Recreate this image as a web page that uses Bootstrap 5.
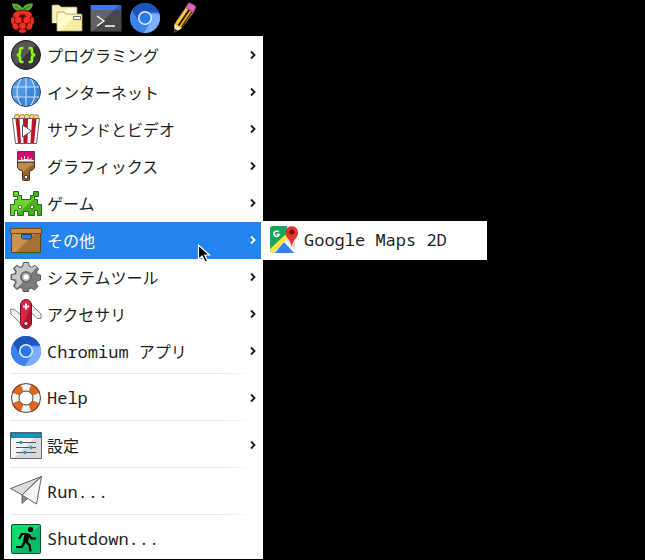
<!DOCTYPE html>
<html lang="ja">
<head>
<meta charset="utf-8">
<meta name="viewport" content="width=device-width, initial-scale=1">
<title>メニュー</title>
<link href="https://cdn.jsdelivr.net/npm/bootstrap@5.3.0/dist/css/bootstrap.min.css" rel="stylesheet">
<style>
body { background: #000; color: #1c1f22; font: 16px/24px "Noto Sans CJK JP", sans-serif; overflow: hidden; }
.latin { font-family: "Noto Sans Mono", "DejaVu Sans Mono", monospace; font-size: 17px; }
svg { display: block; flex: none; }
.panel { height: 36px; padding: 2px 0 2px 6px; gap: 7px; }
.panel .launcher { margin-right: 6px; }
.launcher { background: none; border: 0; padding: 0; }
.start-menu { width: 259px; margin-left: 4px; padding: 1px 2px 1px 1px; background: #fff; }
.entry { display: flex; width: 100%; gap: 5px; align-items: center; padding: 2px 5px 3px; border: 0; background: none; color: inherit; text-align: left; text-decoration: none; white-space: nowrap; }
.entry.current { background: #2384ef; color: #fff; }
.divider { height: 1px; margin: 3px 8px 6px 5px; background: linear-gradient(90deg, #e6e6e6 85%, #fff); }
.submenu { left: 100%; top: -1px; margin-left: 2px; width: 224px; background: #fff; color: #1c1f22; padding: 1px; z-index: 2; }
.pointer { left: 192px; top: 21px; z-index: 3; pointer-events: none; }
</style>
<script src="https://cdn.jsdelivr.net/npm/bootstrap@5.3.0/dist/js/bootstrap.bundle.min.js"></script>
</head>
<body>
<svg width="0" height="0" class="position-absolute" aria-hidden="true">
  <symbol id="chev" viewBox="0 0 6 10"><path d="M1 1.500 4.500 5 1 8.500" fill="none" stroke="currentColor" stroke-width="1.900"/></symbol>
  <symbol id="chromium" viewBox="0 0 32 32">
    <circle cx="16" cy="16" r="15" fill="#2f79e6"/>
    <path d="M3 8.500A15 15 0 0 1 29 8.500L30 10H16L10 19.500Z" fill="#1b55bd"/>
    <path d="M30.300 11.500A15 15 0 0 1 14.500 31L21.500 20 22 11.500Z" fill="#7baefb"/>
    <path d="M3 8.500 10 19.500 16 23 21.500 20 14.500 31A15 15 0 0 1 3 8.500Z" fill="#3b82ec"/>
    <circle cx="16" cy="16" r="7" fill="#e8f1ff"/><circle cx="16" cy="16" r="5.500" fill="#287bea"/>
  </symbol>
</svg>

<nav class="panel d-flex align-items-center" aria-label="パネル">
  <button class="launcher" type="button" aria-label="メニュー">
    <svg width="32" height="32" viewBox="0 0 32 32">
      <path d="M15.500 9C10 9.500 6.500 7 6 1.500c5-.5 8.500 1 10.500 4.500 2-3.500 5.500-5 10.500-4.500C26.500 7 23 9.500 17.500 9Z" fill="#58ab38"/><path d="m9 4 7 4.500L24 4" fill="none" stroke="#2c6a1d"/>
      <path d="M16.500 8c5 0 9 2 9.500 6 3 3 2.500 7 .5 9-1 4-5 6.500-10 8.500-5-2-9-4.500-10-8.500-2-2-2.500-6 .5-9 .5-4 4.500-6 9.500-6Z" fill="#5c100d"/>
      <g fill="#f52e25"><ellipse cx="16.500" cy="10.500" rx="3.600" ry="1.900"/><ellipse cx="10.700" cy="12.500" rx="3.600" ry="2.700" transform="rotate(-35 10.700 12.500)"/><ellipse cx="22.300" cy="12.500" rx="3.600" ry="2.700" transform="rotate(35 22.300 12.500)"/><circle cx="12.300" cy="18" r="3.300"/><circle cx="20.700" cy="18" r="3.300"/><ellipse cx="6.800" cy="18.500" rx="1.700" ry="3.500"/><ellipse cx="26.200" cy="18.500" rx="1.700" ry="3.500"/><circle cx="16.500" cy="23.700" r="3.200"/><ellipse cx="9.500" cy="24.300" rx="2.800" ry="3.300" transform="rotate(-30 9.500 24.300)"/><ellipse cx="23.500" cy="24.300" rx="2.800" ry="3.300" transform="rotate(30 23.500 24.300)"/><ellipse cx="16.500" cy="29" rx="3.500" ry="1.700"/></g>
    </svg>
  </button>
  <button class="launcher me-0" type="button" aria-label="ファイルマネージャ">
    <svg width="32" height="32" viewBox="0 0 32 32">
      <path d="M1 4q0-1 1-1h6l2 2h15q1 0 1 1v15H1Z" fill="#f8efb5" stroke="#a69e72" stroke-width=".7"/><path d="M2 21 17 6h8v15Z" fill="#fffbdc"/>
      <path d="M6 11q0-1 1-1h6l2 2h15q1 0 1 1v16H6Z" fill="#f7eda2" stroke="#a69e72" stroke-width=".8"/><path d="M6.500 28.500V13l1-2h5l2 2h11L10 28.500Z" fill="#fff9cc"/><path d="M22.500 14.500h7v3h-7z" fill="#fff" stroke="#777"/>
    </svg>
  </button>
  <button class="launcher me-0" type="button" aria-label="ターミナル">
    <svg width="32" height="32" viewBox="0 0 32 32">
      <path d="M.5 3.500h31v26H.5z" fill="#484848" stroke="#292929"/><path d="M1 29V8h23L3 29Z" fill="#636363"/><path d="M1 3h30v5H1z" fill="#2857d4"/><path d="M1 3h28l-5 5H1z" fill="#4474f2"/>
      <path d="m7 14 7 5-7 5M15 24h10" fill="none" stroke="#fff" stroke-width="1.300"/>
    </svg>
  </button>
  <button class="launcher me-0" type="button" aria-label="ウェブブラウザ"><svg width="32" height="32"><use href="#chromium"/></svg></button>
  <button class="launcher" type="button" aria-label="エディタ">
    <svg width="32" height="32" viewBox="0 0 32 32">
      <path d="m6.500 22 11.500-17 8 5-12.500 16.500-7 3Z" fill="#f4ab26" stroke="#49300d" stroke-width=".7"/><path d="M8.500 22 19.500 6" stroke="#ffc846" stroke-width="2.500"/><path d="M10.500 23.500 21.500 7.500" stroke="#242018" stroke-width="2"/><path d="M13.500 25 24.500 9" stroke="#242018" stroke-width="1.200"/>
      <path d="M17.500 5.500 20 1.500q1-1 2-.7l5 2.700q1.500 1 .7 2.500L25.500 10.500Z" fill="#dc60bd" stroke="#754064" stroke-width=".7"/><path d="m6.500 22 7 4.500-7 4Z" fill="#f9e9c5"/><path d="m6.500 26.500 3.300 2.200-3.300 1.800Z" fill="#222"/>
    </svg>
  </button>
</nav>

<main class="start-menu">
  <button class="entry" type="button">
    <svg width="32" height="32" viewBox="0 0 32 32"><circle cx="16" cy="16" r="14.500" fill="#353535"/><path d="M5.500 26.500A14.500 14.500 0 0 1 26.500 5.500Z" fill="#555"/><circle cx="16" cy="16" r="14.500" fill="none" stroke="#202020"/><path d="M13.500 9H12q-2 0-2 2v2.500q0 2-3 2.500 3 .5 3 2.500V21q0 2 2 2h1.500M18.500 9H20q2 0 2 2v2.500q0 2 3 2.500-3 .5-3 2.500V21q0 2-2 2h-1.500" fill="none" stroke="#8df21b" stroke-width="2.700"/></svg>
    <span class="flex-grow-1">プログラミング</span><svg width="6" height="10"><use href="#chev"/></svg>
  </button>
  <button class="entry" type="button">
    <svg width="32" height="32" viewBox="0 0 32 32"><circle cx="16" cy="16" r="14.500" fill="#3d86d8"/><path d="M5.500 26.500A14.500 14.500 0 0 1 26.500 5.500Z" fill="#5499e5"/><path d="M16 1v30M2 11h28M2 21h28M11.500 2q-9 14 0 28M20.500 2q9 14 0 28" fill="none" stroke="#c9e2ff" stroke-width="1.100"/><circle cx="16" cy="16" r="14.500" fill="none" stroke="#284b73"/></svg>
    <span class="flex-grow-1">インターネット</span><svg width="6" height="10"><use href="#chev"/></svg>
  </button>
  <button class="entry" type="button">
    <svg width="32" height="32" viewBox="0 0 32 32"><g fill="#f5d67e" stroke="#a77b32" stroke-width=".8"><circle cx="7" cy="4" r="2.700"/><circle cx="12" cy="4" r="2.700"/><circle cx="17" cy="4" r="2.700"/><circle cx="22" cy="4" r="2.700"/><circle cx="26" cy="4" r="2.500"/></g><path d="M2.500 5.500h27L26.500 30.500h-21Z" fill="#fff"/><path d="M5.500 6h4l1.500 24H8ZM13 6h5l-.5 24h-4ZM22 6h4.500L24 30h-3.500Z" fill="#bd1427"/><path d="M2.500 5.500h27L26.500 30.500h-21Z" fill="none" stroke="#666"/><path d="m12.500 12 9 6-9 6Z" fill="#fff" stroke="#555"/></svg>
    <span class="flex-grow-1">サウンドとビデオ</span><svg width="6" height="10"><use href="#chev"/></svg>
  </button>
  <button class="entry" type="button">
    <svg width="32" height="32" viewBox="0 0 32 32"><path d="M7.500 12h17v5q0 3-5 4v9q0 .5-1 .5h-5q-1 0-1-1V21q-5-1-5-4Z" fill="#9a6630" stroke="#4c3117"/><path d="M8 17V13h16l-11 9q0-1.500-1-2-4-1-4-3Z" fill="#c18c49"/><path d="M7.500 1.500h17V12h-17z" fill="#f1edf0" stroke="#444"/><path d="M8 2h16v8h-2.500V8h-1v1.500h-2V6.500h-1V9h-2.500V6h-1v3.500h-2V7h-1v3H8Z" fill="#d30b70"/><circle cx="16" cy="27" r="1.800" fill="#fff" stroke="#4c3117"/></svg>
    <span class="flex-grow-1">グラフィックス</span><svg width="6" height="10"><use href="#chev"/></svg>
  </button>
  <button class="entry" type="button">
    <svg width="32" height="32" viewBox="0 0 32 32"><path id="alien" d="M3.500 4.500h5v4h3v4h9v-4h3v-4h5v5h-4v3h3v5h4v11h-4v-5h-3v5h-6v-4h-5v4h-6v-5h-3v5h-4v-11h4v-5h3v-3h-4Z" fill="#46b01e"/><path d="M4 5h4v4h3v4h10l3-4v3l-17 15v-4H4v5H1V18h3v-5h3V9H4Z" fill="#6bd332"/><path d="M3.500 4.500h5v4h3v4h9v-4h3v-4h5v5h-4v3h3v5h4v11h-4v-5h-3v5h-6v-4h-5v4h-6v-5h-3v5h-4v-11h4v-5h3v-3h-4Z" fill="none" stroke="#24691b"/><path d="M8.500 18.500h3v3h-3zM20.500 18.500h3v3h-3z" fill="#fff" stroke="#56704e"/></svg>
    <span class="flex-grow-1">ゲーム</span><svg width="6" height="10"><use href="#chev"/></svg>
  </button>
  <div class="position-relative">
    <button class="entry current" type="button" aria-expanded="true">
      <svg width="32" height="32" viewBox="0 0 32 32"><path d="M1.500 9.500h29v19h-29z" fill="#a47134" stroke="#644019"/><path d="M2 28V10h22L6 28Z" fill="#cb9350"/><path d="M.5 4.500h31v5H.5z" fill="#c98b46" stroke="#744817"/><path d="M11.500 10.500h10v3l-1 1.500h-8l-1-1.500Z" fill="#2384ef" stroke="#3a3945"/></svg>
      <span class="flex-grow-1">その他</span><svg width="6" height="10"><use href="#chev"/></svg>
    </button>
    <div class="submenu position-absolute">
      <a class="entry" href="#maps">
        <svg width="30" height="32" viewBox="0 0 30 32"><path d="M2 4q0-2 2-2h22v25q0 2-2 2H4q-2 0-2-2Z" fill="#ddd"/><path d="M1 5q0-3 3-3h14v12L1 28Z" fill="#18a561"/><path d="m6 29 9-11 10 11Z" fill="#347ff1"/><path d="m16 14 10 12v3L14 17Z" fill="#f4f4f4"/><path d="M1 25 17 10l2 4L4 29q-3 0-3-4Z" fill="#ffe43c"/><path d="M9.800 7.800a2.800 2.800 0 1 0 .6 2.700H7.500" fill="none" stroke="#fff" stroke-width="1.500"/><path d="M22.500 23q-1-6-4-9-2-2-2-5.500a6.300 6.300 0 0 1 12.600 0q0 3-2 5.500-4 4-4.600 9Z" fill="#e6332a"/><circle cx="22.800" cy="8" r="2.500" fill="#701512"/></svg>
        <span class="latin">Google Maps 2D</span>
      </a>
    </div>
    <svg class="pointer position-absolute" width="14" height="22" viewBox="0 0 14 22" aria-hidden="true"><path d="M1.500 2v14.500l3.500-3.500 3 6 2.500-1.300-2.800-5.700h4.600Z" fill="#000" stroke="#fff" stroke-width="1.200"/></svg>
  </div>
  <button class="entry" type="button">
    <svg width="32" height="32" viewBox="0 0 32 32"><path id="gear" d="m13.500 1.500h5l.8 3.800 2.400 1 3.300-2 3.500 3.500-2 3.300 1 2.400 3 .5v5l-3.500.8-1 2.400 2 3.300-3.500 3.500-3.300-2-2.400 1-.5 2.500h-5l-.8-3-2.400-1-3.300 2-3.300-3.500 2-3.300-1-2.400-3.500-.8v-5l3.500-.5 1-2.400-2-3.300L6.800 4.300l3.300 2 2.400-1Z" fill="#7b7b7b" stroke="#555"/><path d="m14 2h4l.8 3.800 3 1 3-2 2 1.500L7 27l-2-2 2-3.500-1-3-4-1v-3.500l4-.5 1-3-2-3.300 2-2 3 2 3-1Z" fill="#c5c7c6"/><circle cx="16" cy="16" r="5" fill="#b8b8b8" stroke="#6a6a6a" stroke-width="2"/><circle cx="16" cy="16" r="2.500" fill="#fff"/></svg>
    <span class="flex-grow-1">システムツール</span><svg width="6" height="10"><use href="#chev"/></svg>
  </button>
  <button class="entry" type="button">
    <svg width="32" height="32" viewBox="0 0 32 32"><path d="M12 27 1 16l-.5-5 4 .5L13 19ZM20 5l11 11v4.500h-4L18 11Z" fill="#eef0f0" stroke="#666" stroke-width=".8"/><rect x="10.500" y="1.500" width="11" height="29" rx="5.500" fill="#dd2145" stroke="#711323"/><path d="M21 9v16q0 4-5 5-3 0-4-2Z" fill="#b3102f"/><path d="M16 5.500v6M13 8.500h6" stroke="#fff" stroke-width="2"/><circle cx="16" cy="25.500" r="2.200" fill="#d5d5d5" stroke="#7c1024"/></svg>
    <span class="flex-grow-1">アクセサリ</span><svg width="6" height="10"><use href="#chev"/></svg>
  </button>
  <button class="entry" type="button">
    <svg width="32" height="32"><use href="#chromium"/></svg>
    <span class="flex-grow-1"><span class="latin">Chromium </span>アプリ</span><svg width="6" height="10"><use href="#chev"/></svg>
  </button>
  <hr class="divider border-0 opacity-100">
  <button class="entry" type="button">
    <svg width="32" height="32" viewBox="0 0 32 32"><circle cx="16" cy="16" r="11" fill="none" stroke="#f4f4f4" stroke-width="8"/><path d="M20 5.500A11 11 0 0 1 26.500 12M26.500 20a11 11 0 0 1-6.500 6.500M12 26.500A11 11 0 0 1 5.500 20M5.500 12A11 11 0 0 1 12 5.500" fill="none" stroke="#df671f" stroke-width="8"/><circle cx="16" cy="16" r="14.500" fill="none" stroke="#464646"/><circle cx="16" cy="16" r="7" fill="#fff" stroke="#464646"/></svg>
    <span class="latin flex-grow-1">Help</span><svg width="6" height="10"><use href="#chev"/></svg>
  </button>
  <hr class="divider border-0 opacity-100">
  <button class="entry" type="button">
    <svg width="32" height="32" viewBox="0 0 32 32"><path d="M.5 3.500h31v26H.5z" fill="#d7dbdc" stroke="#667"/><path d="M1 29V8h24L4 29Z" fill="#f3f6f6"/><path d="M1 4h30v4.500H1z" fill="#1696b7" stroke="#126177" stroke-width=".7"/><path d="M6 13.500h20M6 18.500h20M6 23.500h20" stroke="#555"/><g fill="#1a9fbe"><circle cx="11" cy="13.500" r="1.700"/><circle cx="21" cy="18.500" r="1.700"/><circle cx="15" cy="23.500" r="1.700"/></g></svg>
    <span class="flex-grow-1">設定</span><svg width="6" height="10"><use href="#chev"/></svg>
  </button>
  <hr class="divider border-0 opacity-100">
  <button class="entry" type="button">
    <svg width="32" height="32" viewBox="0 0 32 32"><g stroke="#555" stroke-width=".9" stroke-linejoin="round"><path d="M31.500.5.5 12.500 12 19Z" fill="#dadcdc"/><path d="M31.500.5 12 19v8.500l5-4.500Z" fill="#8e9090"/><path d="M31.500.5 12 19l14.500 9Z" fill="#f5f5f5"/></g></svg>
    <span class="latin">Run...</span>
  </button>
  <hr class="divider border-0 opacity-100">
  <button class="entry" type="button">
    <svg width="32" height="32" viewBox="0 0 32 32"><rect x="1.500" y="1.500" width="29" height="29" rx="1" fill="#08b968" stroke="#07552f"/><path d="M2 30V2h28Z" fill="#0bdc6f"/><circle cx="20.500" cy="6.500" r="2.700"/><path d="M18 11h-6l-3 5M17 12l-2.500 7-2.500 5H6M18.500 11.500l3 4h4.500M15 18l4.500 4 1 6.500" fill="none" stroke="#000" stroke-width="2.200"/><path d="m15 10 4.500 1-1.500 9-5-2Z"/></svg>
    <span class="latin">Shutdown...</span>
  </button>
</main>
</body>
</html>
